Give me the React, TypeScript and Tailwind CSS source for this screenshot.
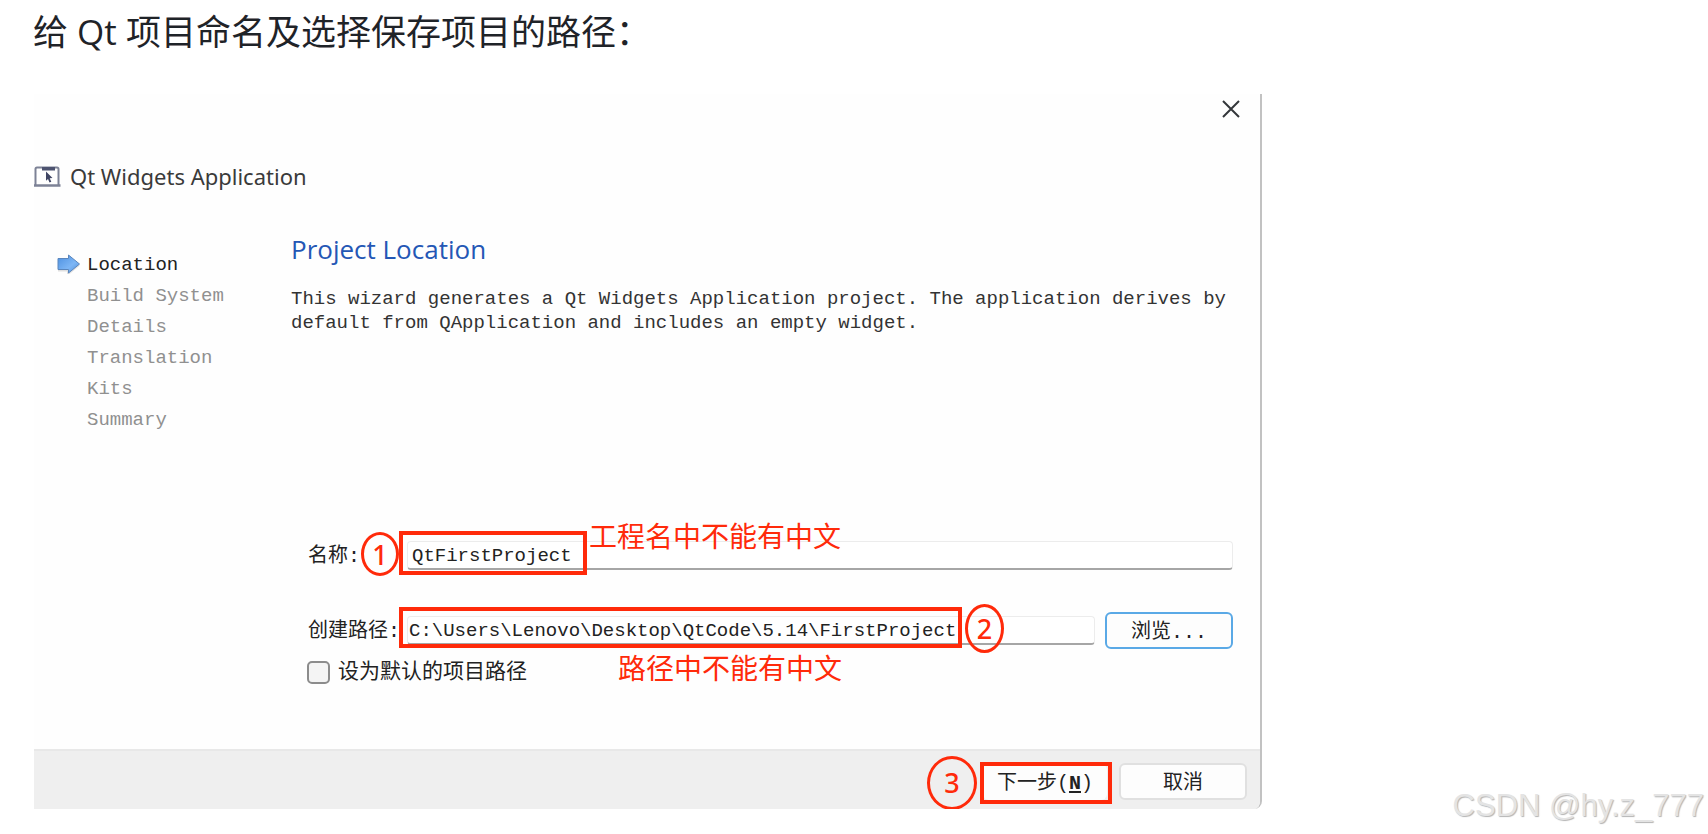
import React from "react";

const steps = ["Location", "Build System", "Details", "Translation", "Kits", "Summary"];

function Marker({ n, className }: { n: number; className: string }) {
  return (
    <span
      className={`absolute flex items-center justify-center rounded-[50%] border-3 border-[#ff2a0a] font-['Noto_Sans','Noto_Sans_CJK_SC',sans-serif] text-[27px] leading-none font-medium text-[#ff2a0a] ${className}`}
    >
      {n}
    </span>
  );
}

function Frame({ className }: { className: string }) {
  return <span className={`pointer-events-none absolute border-4 border-[#ff2a0a] ${className}`} />;
}

function Note({ children, className }: { children: React.ReactNode; className: string }) {
  return (
    <span
      className={`pointer-events-none absolute text-[28px] leading-8 whitespace-nowrap text-[#ff2a0a] ${className}`}
    >
      {children}
    </span>
  );
}

function WindowIcon() {
  return (
    <svg viewBox="0 0 27 21" className="h-[21px] w-[27px]" aria-hidden="true">
      <path d="M1.500 19V3q0-1.500 1.500-1.500h20q1.500 0 1.500 1.500V19" fill="#fff" stroke="#7d8296" strokeWidth="2" />
      <path d="M8 1h13v3.500H8z" fill="#4d5370" />
      <path d="M0 19.500h26.500" stroke="#7d8296" strokeWidth="2.400" />
      <path d="M12 5.500l6.500 6.500-2.800.3 1.600 3.400-1.800.8-1.500-3.500-2 1.800z" fill="#3f4563" />
    </svg>
  );
}

function StepArrow() {
  return (
    <svg viewBox="0 0 24 20" className="h-5 w-6" aria-hidden="true">
      <defs>
        <linearGradient id="step-arrow" x1="0" y1="0" x2="1" y2="1">
          <stop offset="0" stopColor="#4b8fe0" />
          <stop offset="0.6" stopColor="#7db6f5" />
          <stop offset="1" stopColor="#4f8fdc" />
        </linearGradient>
      </defs>
      <path d="M1 16.5h10v3.5l11-9" fill="none" stroke="#000" strokeOpacity="0.12" strokeWidth="2" />
      <path d="M1 4.500h10.500V1L22.500 10 11.500 19v-3.500H1z" fill="url(#step-arrow)" stroke="#5a86bd" strokeWidth="1" />
    </svg>
  );
}

const fieldClass =
  "h-[29px] w-full min-w-0 rounded-sm border border-b-2 border-[#ececec] border-b-[#a6a6a6] bg-white pt-px text-[19px] leading-6 text-[#222] outline-none";

export default function App() {
  return (
    <main className="flex min-h-screen flex-col bg-white pl-[33px] font-['Noto_Sans','Noto_Sans_CJK_SC',sans-serif]">
      <h1 className="pt-[7px] text-[35px] leading-[50px] font-normal text-[#1f2328] font-['Open_Sans','Noto_Sans_CJK_SC',sans-serif]">
        给 Qt 项目命名及选择保存项目的路径：
      </h1>

      <section className="mt-[37px] ml-px flex w-full max-w-[1228px] flex-col overflow-hidden rounded-br-lg border-r-2 border-[#c2c2c2] bg-[#fefefe] font-['Liberation_Mono','Noto_Sans_CJK_SC',monospace]">
        <div className="flex justify-end pt-[3px] pr-[17px]">
          <button type="button" aria-label="Close" className="p-[2px]">
            <svg viewBox="0 0 20 20" className="size-5" aria-hidden="true">
              <path d="M2 2l16 16M18 2L2 18" stroke="#33363a" strokeWidth="2" />
            </svg>
          </button>
        </div>

        <header className="mt-[30px] flex h-[50px] items-center gap-[9px]">
          <WindowIcon />
          <h2 className="text-[22px] font-['Noto_Sans',sans-serif] text-[#3a3a3a]">Qt Widgets Application</h2>
        </header>

        <div className="mt-[33px] flex">
          <nav className="w-[257px] shrink-0 pt-4">
            <ol className="text-[19px] leading-[31px] text-[#909090]">
              {steps.map((step, i) => (
                <li key={step} className="flex items-center">
                  <span className="flex w-[53px] justify-end pr-[6px] pb-[3px]">{i === 0 && <StepArrow />}</span>
                  <span className={i === 0 ? "text-[#222]" : ""}>{step}</span>
                </li>
              ))}
            </ol>
          </nav>

          <div className="min-w-0 flex-1 pr-[27px]">
            <h3 className="text-[26px] leading-[30px] font-['Open_Sans',sans-serif] text-[#2457b5]">
              Project Location
            </h3>
            <p className="mt-[23px] text-[19px] leading-6 text-[#333]">
              This wizard generates a Qt Widgets Application project. The application derives by default from
              QApplication and includes an empty widget.
            </p>

            <form id="location" className="mt-[206px] pb-[65px] pl-[17px] text-[21px] text-[#222]">
              <div className="relative flex h-[29px] items-center">
                <label htmlFor="name" className="w-[99px] shrink-0 pt-[2px] text-[20px]">
                  名称:
                </label>
                <input id="name" defaultValue="QtFirstProject" className={`${fieldClass} pl-1`} />
                <Frame className="-top-[10px] left-[91px] h-[44px] w-[188px]" />
                <Marker n={1} className="-top-[9px] left-[53px] h-[44px] w-[38px]" />
                <Note className="-top-[17px] left-[281px]">工程名中不能有中文</Note>
              </div>

              <div className="relative mt-[42px] flex h-[37px] items-center">
                <label htmlFor="path" className="w-[99px] shrink-0 pt-[2px] text-[20px]">
                  创建路径:
                </label>
                <input
                  id="path"
                  defaultValue="C:\Users\Lenovo\Desktop\QtCode\5.14\FirstProject"
                  className={`${fieldClass} pl-px`}
                />
                <button
                  type="button"
                  className="ml-[10px] h-[37px] w-[128px] shrink-0 rounded-md border-2 border-[#5aa9e6] bg-[#fdfdfd] pt-1 text-[20px] leading-6"
                >
                  浏览...
                </button>
                <Frame className="-top-[5px] left-[91px] h-[41px] w-[563px]" />
                <Marker n={2} className="-top-[8px] left-[657px] h-[49px] w-[39px]" />
                <Note className="top-[44px] left-[310px]">路径中不能有中文</Note>
              </div>

              <div className="-ml-px mt-[11px] flex h-6 w-fit items-center gap-2">
                <input
                  id="default-path"
                  type="checkbox"
                  className="size-[23px] appearance-none rounded-[5px] border-2 border-[#8c8c8c] bg-[#f4f4f4]"
                />
                <label htmlFor="default-path" className="pt-[2px]">
                  设为默认的项目路径
                </label>
              </div>
            </form>
          </div>
        </div>

        <footer className="flex h-[60px] items-center justify-end gap-3 border-t-2 border-[#e8e8e8] bg-[#efefef] pt-[3px] pr-[13px] text-[20px] leading-6 text-[#222]">
          <div className="relative">
            <button type="submit" form="location" className="h-9 w-[124px] rounded-md bg-[#fdfdfd] pt-1">
              下一步(<u className="font-bold underline-offset-2">N</u>)
            </button>
            <Frame className="-top-[2px] -right-[5px] -bottom-1 -left-[3px]" />
            <Marker n={3} className="-top-[8px] -left-[56px] h-[54px] w-[50px]" />
          </div>
          <button
            type="button"
            className="h-[37px] w-[128px] rounded-md border-2 border-[#e0e0e0] bg-[#fdfdfd] pt-1"
          >
            取消
          </button>
        </footer>
      </section>

      <p className="absolute right-1 bottom-2 text-[31px] leading-10 font-['Liberation_Sans',sans-serif] text-[#e4e4e4] [text-shadow:1px_1px_1px_#b4b4b4]">
        CSDN @hy.z_777
      </p>
    </main>
  );
}
